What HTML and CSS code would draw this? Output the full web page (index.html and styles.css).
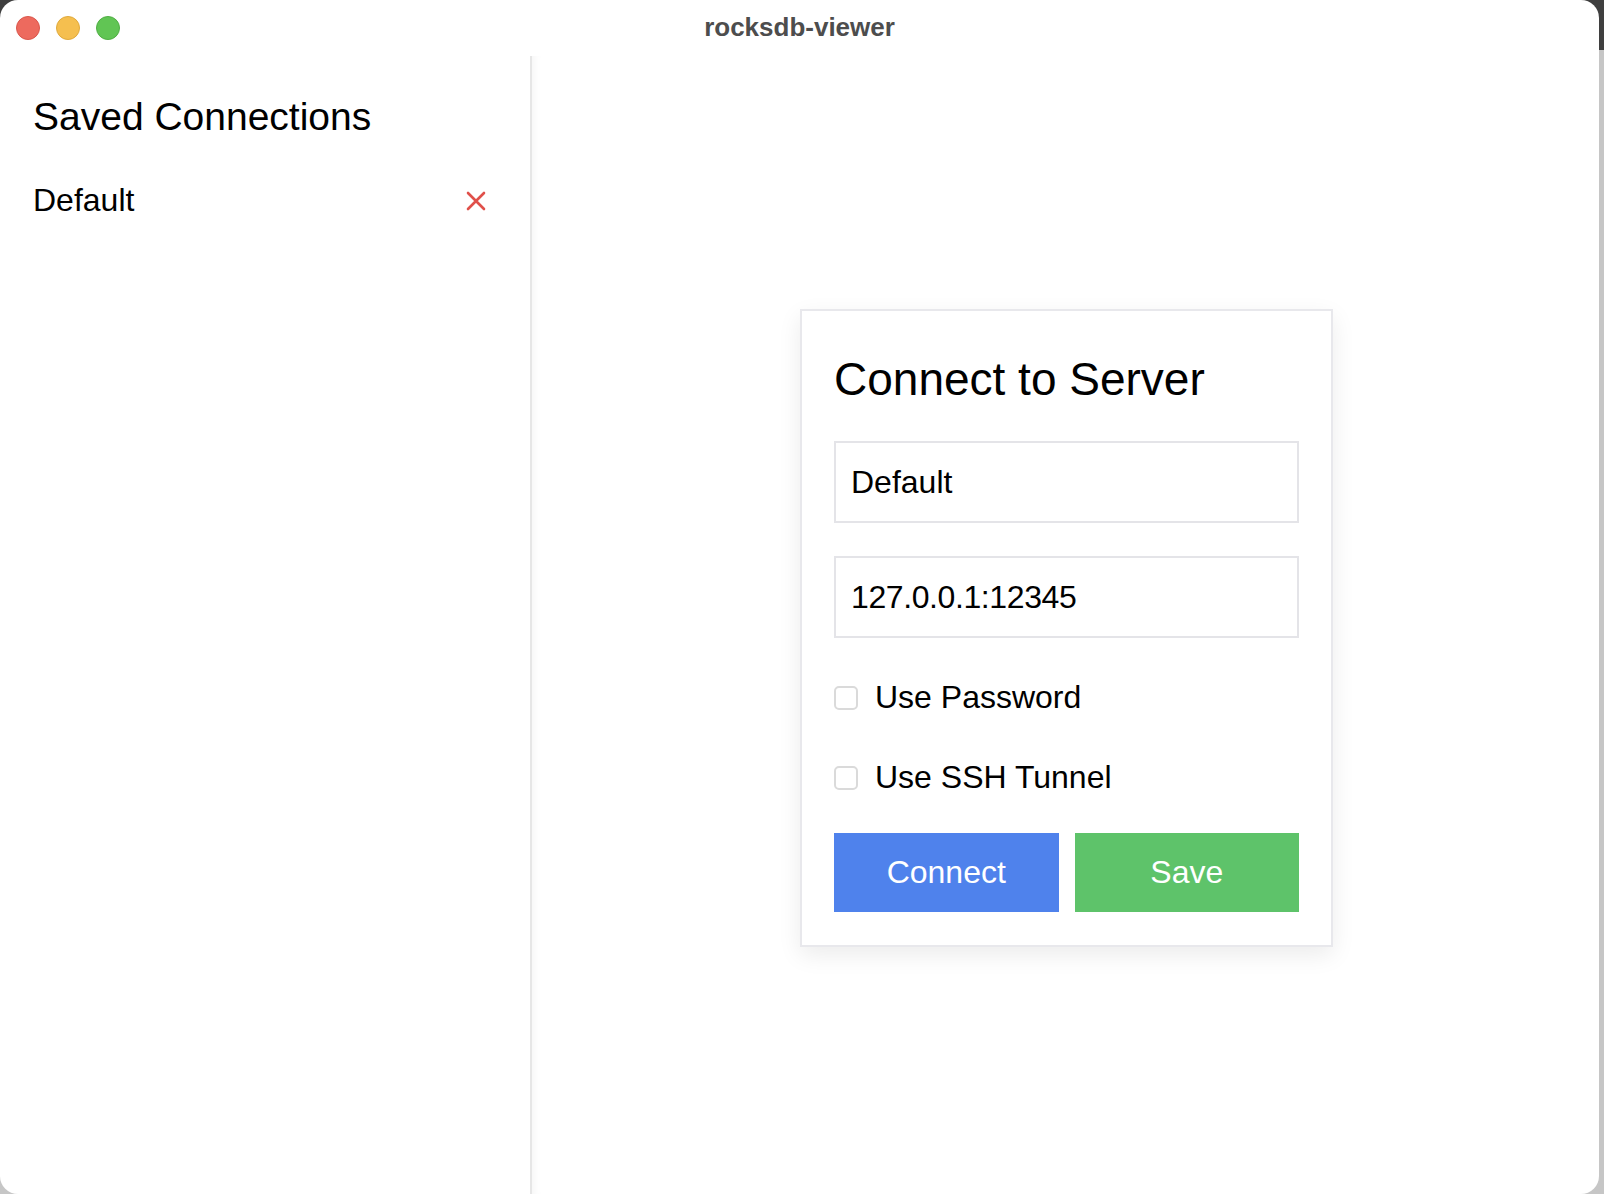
FILE: index.html
```html
<!DOCTYPE html>
<html>
  <head>
    <meta charset="UTF-8" />
    <link rel="stylesheet" href="styles.css">
  </head>

  <body>
    <div class="window">
      <div class="titlebar">
        <div class="traffic">
          <span class="light red"></span>
          <span class="light yellow"></span>
          <span class="light green"></span>
        </div>
        <div class="title">rocksdb-viewer</div>
      </div>

      <div class="app">
        <div class="sidebar">
          <h3>Saved Connections</h3>
          <div class="conn-row">
            <span>Default</span>
            <svg class="remove" width="20" height="20" viewBox="0 0 20 20">
              <path d="M2 2 L18 18 M18 2 L2 18" stroke="#e0504a" stroke-width="2.6" stroke-linecap="round" />
            </svg>
          </div>
        </div>

        <div class="main">
          <div class="card">
            <h2>Connect to Server</h2>
            <input class="input-field" type="text" value="Default" />
            <input class="input-field second" type="text" value="127.0.0.1:12345" />
            <label class="check-row first">
              <input type="checkbox" />
              Use Password
            </label>
            <label class="check-row">
              <input type="checkbox" />
              Use SSH Tunnel
            </label>
            <div class="buttons">
              <button class="btn connect">Connect</button>
              <button class="btn save">Save</button>
            </div>
          </div>
        </div>
      </div>
    </div>
  </body>
</html>
```

FILE: styles.css
```css
html,
body {
  margin: 0;
  width: 1604px;
  height: 1194px;
  overflow: hidden;
}
body {
  background: linear-gradient(to bottom, #3f3f3f 0, #3f3f3f 50px, #c6c6c6 50px);
  font-family: 'Liberation Sans', Arial, sans-serif;
  color: #000;
}

.window {
  width: 1599px;
  height: 1194px;
  background: white;
  border-radius: 18px;
  overflow: hidden;
  display: flex;
  flex-direction: column;
}

.titlebar {
  height: 56px;
  flex-shrink: 0;
  display: flex;
  align-items: center;
  justify-content: center;
  position: relative;
}
.traffic {
  position: absolute;
  left: 16px;
  top: 16px;
  display: flex;
  gap: 16px;
}
.light {
  width: 24px;
  height: 24px;
  border-radius: 50%;
  box-sizing: border-box;
}
.red {
  background: #ed6a5e;
  border: 1px solid #d9574c;
}
.yellow {
  background: #f5bf4f;
  border: 1px solid #dfa93c;
}
.green {
  background: #61c554;
  border: 1px solid #50ae44;
}
.title {
  font-size: 26px;
  font-weight: bold;
  color: #4d4d4d;
  margin-top: -2px;
}

.app {
  flex: 1;
  display: flex;
}

.sidebar {
  width: 532px;
  flex-shrink: 0;
  box-sizing: border-box;
  padding: 39px 44px 0 33px;
  border-right: 2px solid #e6e6e6;
}
.sidebar h3 {
  font-size: 39px;
  font-weight: normal;
  margin: 0 0 43px;
}
.conn-row {
  display: flex;
  justify-content: space-between;
  align-items: center;
  font-size: 32px;
}

.main {
  flex: 1;
  display: flex;
  align-items: center;
  justify-content: center;
  padding: 6px 0 0 2px;
  box-shadow: inset 12px 0 12px -12px rgba(0, 0, 0, 0.06);
}

.card {
  width: 533px;
  box-sizing: border-box;
  border: 2px solid #e8e8ec;
  padding: 32px 32px 33px;
  background: white;
  box-shadow: 0 8px 22px rgba(0, 0, 0, 0.08);
  display: flex;
  flex-direction: column;
}
.card h2 {
  font-size: 46px;
  font-weight: normal;
  line-height: 1.15;
  margin: 10px 0 35px;
}

.input-field {
  height: 82px;
  box-sizing: border-box;
  border: 2px solid #e4e4e8;
  border-radius: 0;
  padding: 2px 15px 0;
  font-family: inherit;
  font-size: 32px;
  color: #000;
  outline: none;
}
.input-field.second {
  margin-top: 33px;
  letter-spacing: -0.4px;
}

.check-row {
  height: 40px;
  display: flex;
  align-items: center;
  gap: 17px;
  font-size: 32px;
  margin-top: 40px;
}
.check-row.first {
  margin-top: 40px;
}
.check-row input {
  appearance: none;
  margin: 0;
  width: 24px;
  height: 24px;
  border: 2px solid #dadada;
  border-radius: 5px;
  background: white;
}

.buttons {
  margin-top: 35px;
  display: grid;
  grid-template-columns: 1fr 1fr;
  gap: 16px;
}
.btn {
  height: 79px;
  border: none;
  font-family: inherit;
  font-size: 32px;
  color: white;
}
.connect {
  background: #4f82ec;
}
.save {
  background: #5ec36a;
}
```
